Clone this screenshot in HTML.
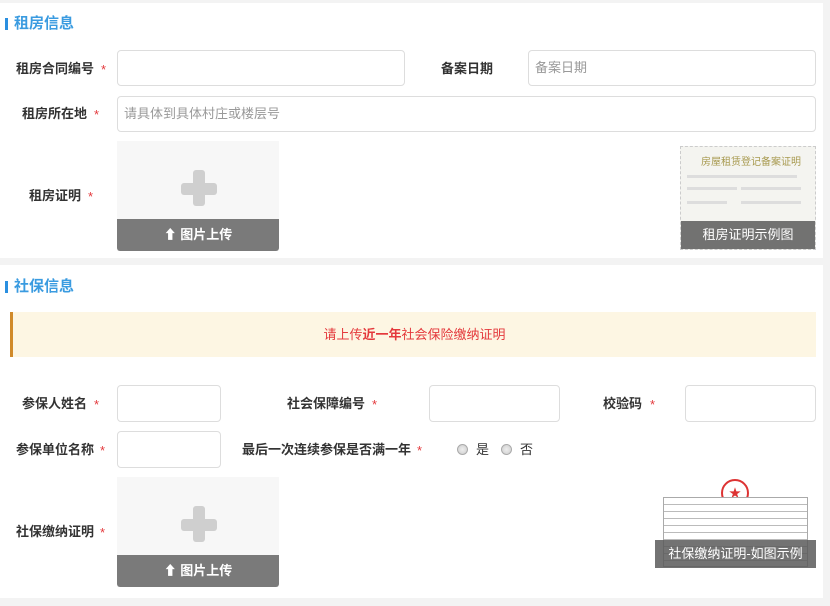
<!DOCTYPE html>
<html><head><meta charset="utf-8"><style>
*{box-sizing:border-box;margin:0;padding:0}
body{width:830px;height:606px;background:#f3f3f3;font-family:"Liberation Sans","Noto Sans CJK SC",sans-serif;position:relative;overflow:hidden;font-size:13px;color:#333;line-height:16px}
.p{position:absolute;left:0;width:823px;background:#fff}
.a{position:absolute}
.t{font-size:15px;font-weight:bold;color:#3a9be0;white-space:nowrap;line-height:18px}
.bar{width:3px;height:12px;background:#2a8fe0}
.lb{font-weight:bold;color:#333;white-space:nowrap;font-size:13px}
.st{color:#e4393c;font-size:13px}
.in{border:1px solid #ddd;border-radius:4px;background:#fff;color:#999;padding-left:6px;display:flex;align-items:center;font-size:13px}
.up{background:#f7f7f7}
.btn{position:absolute;left:0;right:0;bottom:0;height:32px;background:#7a7a7a;border-radius:0 0 3px 3px;color:#fff;font-weight:bold;display:flex;align-items:center;justify-content:center;font-size:13px}
.ph{position:absolute;background:#cfcfcf;border-radius:3px}
.ov{position:absolute;left:0;right:0;bottom:0;background:rgba(90,90,90,.85);color:#fff;display:flex;align-items:center;justify-content:center;font-size:13px}
.rd{width:11px;height:11px;border-radius:50%;border:1px solid #aaa;background:radial-gradient(#eee,#ccc)}
</style></head><body>
<div class="p" style="top:3px;height:255px"></div>
<div class="p" style="top:265px;height:333px"></div>

<div class="a bar" style="left:5px;top:18px"></div>
<div class="a t" style="left:14px;top:15px">租房信息</div>
<div class="a lb" style="left:16px;top:61px">租房合同编号</div><div class="a st" style="left:101px;top:62px">*</div>
<div class="a in" style="left:117px;top:50px;width:288px;height:36px"></div>
<div class="a lb" style="left:441px;top:61px">备案日期</div>
<div class="a in" style="left:528px;top:50px;width:288px;height:36px">备案日期</div>
<div class="a lb" style="left:22px;top:106px">租房所在地</div><div class="a st" style="left:94px;top:107px">*</div>
<div class="a in" style="left:117px;top:96px;width:699px;height:36px">请具体到具体村庄或楼层号</div>
<div class="a lb" style="left:29px;top:188px">租房证明</div><div class="a st" style="left:88px;top:189px">*</div>
<div class="a up" style="left:117px;top:141px;width:162px;height:110px">
 <div class="ph" style="left:64px;top:42px;width:36px;height:12px"></div>
 <div class="ph" style="left:76px;top:29px;width:12px;height:36px"></div>
 <div class="btn">⬆ 图片上传</div></div>
<div class="a" style="left:680px;top:146px;width:136px;height:104px;background:#f4f4f0;border:1px dashed #ccc;overflow:hidden">
 <div class="a" style="left:20px;top:8px;font-size:10px;color:#a89a50;white-space:nowrap">房屋租赁登记备案证明</div>
 <div class="a" style="left:6px;top:28px;width:110px;height:3px;background:#ddd"></div>
 <div class="a" style="left:6px;top:40px;width:50px;height:3px;background:#ddd"></div>
 <div class="a" style="left:60px;top:40px;width:60px;height:3px;background:#ddd"></div>
 <div class="a" style="left:6px;top:54px;width:40px;height:3px;background:#ddd"></div>
 <div class="a" style="left:60px;top:54px;width:60px;height:3px;background:#ddd"></div>
 <div class="ov" style="height:28px">租房证明示例图</div></div>

<div class="a bar" style="left:5px;top:281px"></div>
<div class="a t" style="left:14px;top:278px">社保信息</div>
<div class="a" style="left:10px;top:312px;width:806px;height:45px;background:#fdf6e3;border-left:3px solid #d08a2a;color:#e4393c;display:flex;align-items:center;justify-content:center;font-size:13px">请上传<b style="font-weight:bold">近一年</b>社会保险缴纳证明</div>

<div class="a lb" style="left:22px;top:396px">参保人姓名</div><div class="a st" style="left:94px;top:397px">*</div>
<div class="a in" style="left:117px;top:385px;width:104px;height:37px"></div>
<div class="a lb" style="left:287px;top:396px">社会保障编号</div><div class="a st" style="left:372px;top:397px">*</div>
<div class="a in" style="left:429px;top:385px;width:131px;height:37px"></div>
<div class="a lb" style="left:603px;top:396px">校验码</div><div class="a st" style="left:650px;top:397px">*</div>
<div class="a in" style="left:685px;top:385px;width:131px;height:37px"></div>

<div class="a lb" style="left:16px;top:442px">参保单位名称</div><div class="a st" style="left:100px;top:443px">*</div>
<div class="a in" style="left:117px;top:431px;width:104px;height:37px"></div>
<div class="a lb" style="left:242px;top:442px">最后一次连续参保是否满一年</div><div class="a st" style="left:417px;top:443px">*</div>
<div class="a rd" style="left:457px;top:444px"></div><div class="a" style="left:476px;top:442px">是</div>
<div class="a rd" style="left:501px;top:444px"></div><div class="a" style="left:520px;top:442px">否</div>

<div class="a lb" style="left:16px;top:524px">社保缴纳证明</div><div class="a st" style="left:100px;top:525px">*</div>
<div class="a up" style="left:117px;top:477px;width:162px;height:110px">
 <div class="ph" style="left:64px;top:42px;width:36px;height:12px"></div>
 <div class="ph" style="left:76px;top:29px;width:12px;height:36px"></div>
 <div class="btn">⬆ 图片上传</div></div>
<div class="a" style="left:655px;top:475px;width:161px;height:93px;background:#fff;overflow:hidden">
 <div class="a" style="left:66px;top:4px;width:28px;height:28px;border:2px solid #d33;border-radius:50%;color:#d33;font-size:12px;text-align:center;line-height:24px">★</div>
 <div class="a" style="left:8px;top:22px;width:145px;height:70px;border:1px solid #aaa;background:repeating-linear-gradient(#fff 0 6px,#bbb 6px 7px)"></div>
 <div class="ov" style="height:28px">社保缴纳证明-如图示例</div></div>
</body></html>
